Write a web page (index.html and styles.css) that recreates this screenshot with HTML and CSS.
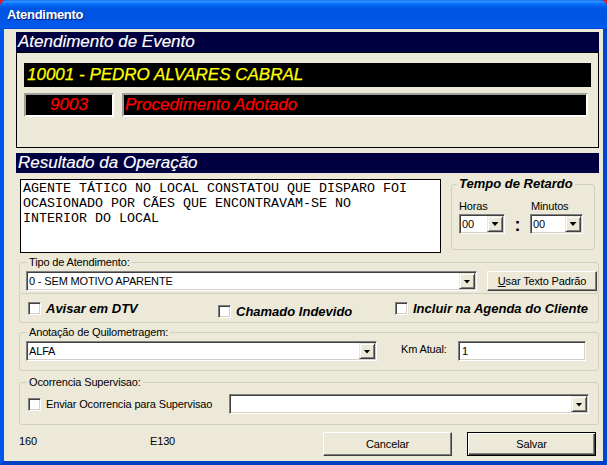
FILE: index.html
```html
<!DOCTYPE html>
<html lang="pt-BR">
<head>
<meta charset="utf-8">
<title>Atendimento</title>
<link rel="stylesheet" href="styles.css">
</head>
<body>
<div class="window">
  <div class="titlebar">Atendimento</div>
  <div class="frame">
    <div class="client">
      <div class="section-head">Atendimento de Evento</div>
      <div class="event-box">
        <div class="lcd-name">10001 - PEDRO ALVARES CABRAL</div>
        <div class="proc-row">
          <div class="lcd lcd-code">9003</div>
          <div class="lcd lcd-proc">Procedimento Adotado</div>
        </div>
      </div>

      <div class="section-head head-result">Resultado da Operação</div>
      <div class="result-row">
        <div class="memo">AGENTE TÁTICO NO LOCAL CONSTATOU QUE DISPARO FOI
OCASIONADO POR CÃES QUE ENCONTRAVAM-SE NO
INTERIOR DO LOCAL</div>
        <fieldset class="group tempo">
          <legend>Tempo de Retardo</legend>
          <div class="tempo-body">
            <div class="tempo-labels"><span class="lbl-hh">Horas</span><span>Minutos</span></div>
            <div class="tempo-combos">
              <div class="combo combo-hh"><span class="combo-text">00</span><span class="combo-btn"></span></div>
              <span class="colon">:</span>
              <div class="combo combo-mm"><span class="combo-text">00</span><span class="combo-btn"></span></div>
            </div>
          </div>
        </fieldset>
      </div>

      <fieldset class="group tipo">
        <legend>Tipo de Atendimento:</legend>
        <div class="row-tipo">
          <div class="combo combo-tipo"><span class="combo-text">0 - SEM MOTIVO APARENTE</span><span class="combo-btn"></span></div>
          <div class="btn btn-padrao"><u>U</u>sar Texto Padrão</div>
        </div>
      </fieldset>

      <div class="checks">
        <div class="check check-dtv"><span class="cb"></span><span class="check-bold">Avisar em DTV</span></div>
        <div class="check check-indevido"><span class="cb"></span><span class="check-bold">Chamado Indevido</span></div>
        <div class="check check-agenda"><span class="cb"></span><span class="check-bold">Incluir na Agenda do Cliente</span></div>
      </div>

      <fieldset class="group km">
        <legend>Anotação de Quilometragem:</legend>
        <div class="row-km">
          <div class="combo combo-alfa"><span class="combo-text">ALFA</span><span class="combo-btn"></span></div>
          <span class="km-label">Km Atual:</span>
          <div class="input km-input">1</div>
        </div>
      </fieldset>

      <fieldset class="group sup">
        <legend>Ocorrencia Supervisao:</legend>
        <div class="row-sup">
          <div class="sup-check"><span class="cb"></span><span class="sup-text">Enviar Ocorrencia para Supervisao</span></div>
          <div class="combo combo-sup"><span class="combo-text"></span><span class="combo-btn"></span></div>
        </div>
      </fieldset>

      <div class="footer">
        <span class="num1">160</span>
        <span class="num2">E130</span>
        <div class="btn btn-cancel">Cancelar</div>
        <div class="btn btn-default">Salvar</div>
      </div>
    </div>
  </div>
</div>
</body>
</html>
```

FILE: styles.css
```css
* { box-sizing: border-box; }

html, body { margin: 0; padding: 0; }

body {
  width: 607px;
  height: 465px;
  overflow: hidden;
  background: #d81e1e;
  font-family: "Liberation Sans", Arial, sans-serif;
  font-size: 11px;
  letter-spacing: -0.15px;
  color: #000;
}

.window {
  width: 607px;
  height: 465px;
  display: flex;
  flex-direction: column;
  border-radius: 7px 7px 0 0;
  overflow: hidden;
  background: #0054e3;
}

.titlebar {
  flex: none;
  height: 29px;
  padding: 7px 0 0 7px;
  font: bold 13px/16px "Liberation Sans", Arial, sans-serif;
  letter-spacing: -0.3px;
  color: #fff;
  text-shadow: 1px 1px 0 #0a1d79;
  background: linear-gradient(to bottom,
    #0a5eef 0px, #3a93ff 1px, #288eff 2px, #127dff 3px, #036ffc 4px,
    #0262ee 6px, #0057e5 8px, #0054e3 12px, #0055e5 20px, #0058eb 24px,
    #005cf0 27px, #0048d0 29px);
}

.frame {
  flex: 1;
  display: flex;
  border-style: solid;
  border-width: 0 4px 4px 4px;
  border-color: #0055e5 #0047cf #0041c4 #0058ea;
  background: #ece9d8;
}

.client {
  flex: 1;
  display: flex;
  flex-direction: column;
  padding: 3px 4px 4px 12px;
}

/* section headers */
.section-head {
  flex: none;
  height: 20px;
  padding-left: 2px;
  background: #000040;
  color: #fff;
  font: italic 17px/20px "Liberation Sans", Arial, sans-serif;
  letter-spacing: 0;
  -webkit-text-stroke: 0.15px #fff;
}

.head-result { margin-top: 5px; }

/* event box */
.event-box {
  flex: none;
  height: 96px;
  border: 1px solid #000;
}

.lcd-name {
  margin: 10px 7px 0 7px;
  height: 24px;
  padding-left: 3px;
  background: #000;
  color: #ffff00;
  font: italic 17px/24px "Liberation Sans", Arial, sans-serif;
  letter-spacing: 0;
  -webkit-text-stroke: 0.25px #ffff00;
}

.proc-row {
  display: flex;
  gap: 8px;
  margin: 6px 10px 0 7px;
}

.lcd {
  height: 24px;
  background: #000;
  color: #ff0000;
  border: 2px solid;
  border-color: #a0a09a #fff #fff #a0a09a;
  font: italic 17px/20px "Liberation Sans", Arial, sans-serif;
  letter-spacing: 0;
  -webkit-text-stroke: 0.25px #ff0000;
}

.lcd-code { width: 90px; text-align: center; }
.lcd-proc { flex: 1; padding-left: 1px; }

/* result */
.result-row {
  flex: none;
  display: flex;
  align-items: flex-start;
  margin-top: 4px;
}

.memo {
  flex: none;
  width: 421px;
  height: 74px;
  margin: 2px 0 0 4px;
  padding: 1px 0 0 2px;
  background: #fff;
  border: 1px solid #000;
  white-space: pre;
  letter-spacing: 0;
  font: 13.33px/15px "Liberation Mono", "Courier New", monospace;
}

/* group boxes */
.group {
  margin: 0;
  padding: 0;
  min-width: 0;
  border: 1px solid #d0d0bf;
  border-radius: 3px;
}

.group > legend {
  margin-left: 7px;
  padding: 0 2px;
  font-size: 11px;
  line-height: 14px;
}

.tempo {
  flex: none;
  width: 144px;
  height: 73px;
  margin-left: 10px;
}

.tempo > legend {
  margin-left: 5px;
  font: bold italic 13px/14px "Liberation Sans", Arial, sans-serif;
  letter-spacing: 0;
}

.tempo-body { padding: 8px 0 0 7px; }

.tempo-labels { display: flex; line-height: 14px; }
.lbl-hh { width: 72px; }

.tempo-combos { display: flex; align-items: center; }
.combo-hh { width: 46px; }
.combo-mm { width: 53px; }

.colon {
  width: 25px;
  text-align: center;
  font: bold 18px/18px "Liberation Sans", Arial, sans-serif;
  padding-top: 3px;
}

/* combo */
.combo {
  display: flex;
  height: 20px;
  padding: 1px;
  background: #fff;
  border: 1px solid;
  border-color: #808080 #fff #fff #808080;
  box-shadow: inset 1px 1px 0 #404040, inset -1px -1px 0 #d4d0c8;
}

.combo-text {
  flex: 1;
  padding-left: 1px;
  line-height: 16px;
  white-space: nowrap;
  overflow: hidden;
}

.combo-btn {
  flex: none;
  width: 16px;
  height: 16px;
  display: flex;
  align-items: center;
  justify-content: center;
  background: #ece9d8;
  border: 1px solid;
  border-color: #ece9d8 #404040 #404040 #ece9d8;
  box-shadow: inset 1px 1px 0 #fff, inset -1px -1px 0 #808080;
}

.combo-btn::after {
  content: "";
  width: 7px;
  height: 4px;
  margin-top: 1px;
  background: #000;
  clip-path: polygon(0 0, 100% 0, 50% 100%);
}

/* tipo */
.tipo { flex: none; margin: 2px 0 0 3px; }

.row-tipo {
  display: flex;
  gap: 10px;
  padding: 2px 0 2px 6px;
}

.combo-tipo { width: 451px; }

/* buttons */
.btn {
  display: flex;
  align-items: center;
  justify-content: center;
  background: #ece9d8;
  border: 1px solid;
  border-color: #fff #404040 #404040 #fff;
  box-shadow: inset -1px -1px 0 #808080;
  white-space: nowrap;
}

.btn-padrao { width: 110px; height: 20px; }
.btn u { text-decoration: underline; }

/* checkboxes */
.checks {
  flex: none;
  display: flex;
  align-items: flex-start;
  height: 29px;
  margin-left: 3px;
  padding: 8px 0 0 8px;
  border: 1px solid #d0d0bf;
  border-top: none;
  border-radius: 0 0 3px 3px;
}

.check { display: flex; align-items: flex-start; }
.check-dtv { width: 190px; }
.check-indevido { width: 177px; margin-top: 3px; }

.cb {
  flex: none;
  width: 13px;
  height: 13px;
  background: #fff;
  border: 1px solid;
  border-color: #808080 #fff #fff #808080;
  box-shadow: inset 1px 1px 0 #404040, inset -1px -1px 0 #d4d0c8;
}

.check-bold {
  margin-left: 5px;
  font: bold italic 13px/13px "Liberation Sans", Arial, sans-serif;
  letter-spacing: 0;
}

/* km */
.km { flex: none; margin: 2px 0 0 3px; }

.row-km {
  display: flex;
  align-items: flex-start;
  padding: 2px 0 9px 6px;
}

.combo-alfa { width: 351px; }

.km-label {
  width: 57px;
  margin: 1px 0 0 24px;
  line-height: 14px;
}

.input {
  height: 20px;
  padding: 2px 3px;
  line-height: 14px;
  background: #fff;
  border: 1px solid;
  border-color: #808080 #fff #fff #808080;
  box-shadow: inset 1px 1px 0 #404040, inset -1px -1px 0 #d4d0c8;
}

.km-input { width: 128px; }

/* supervisao */
.sup { flex: none; margin: 4px 0 0 3px; }

.row-sup {
  display: flex;
  align-items: center;
  padding: 5px 0 10px 8px;
}

.sup-check {
  width: 201px;
  display: flex;
  align-items: center;
}

.sup-text { margin-left: 5px; line-height: 14px; white-space: nowrap; }

.combo-sup { width: 360px; }

/* footer */
.footer {
  flex: none;
  display: flex;
  align-items: flex-start;
  margin-top: 7px;
  padding-left: 3px;
}

.num1 { width: 131px; margin-top: 2px; line-height: 14px; }
.num2 { flex: 1; margin-top: 2px; line-height: 14px; }

.btn-cancel { width: 129px; height: 24px; }

.btn-default {
  width: 129px;
  height: 24px;
  margin: 0 3px 0 15px;
  border: 1px solid #000;
  box-shadow: inset 1px 1px 0 #fff, inset -1px -1px 0 #404040, inset -2px -2px 0 #808080;
}
```
